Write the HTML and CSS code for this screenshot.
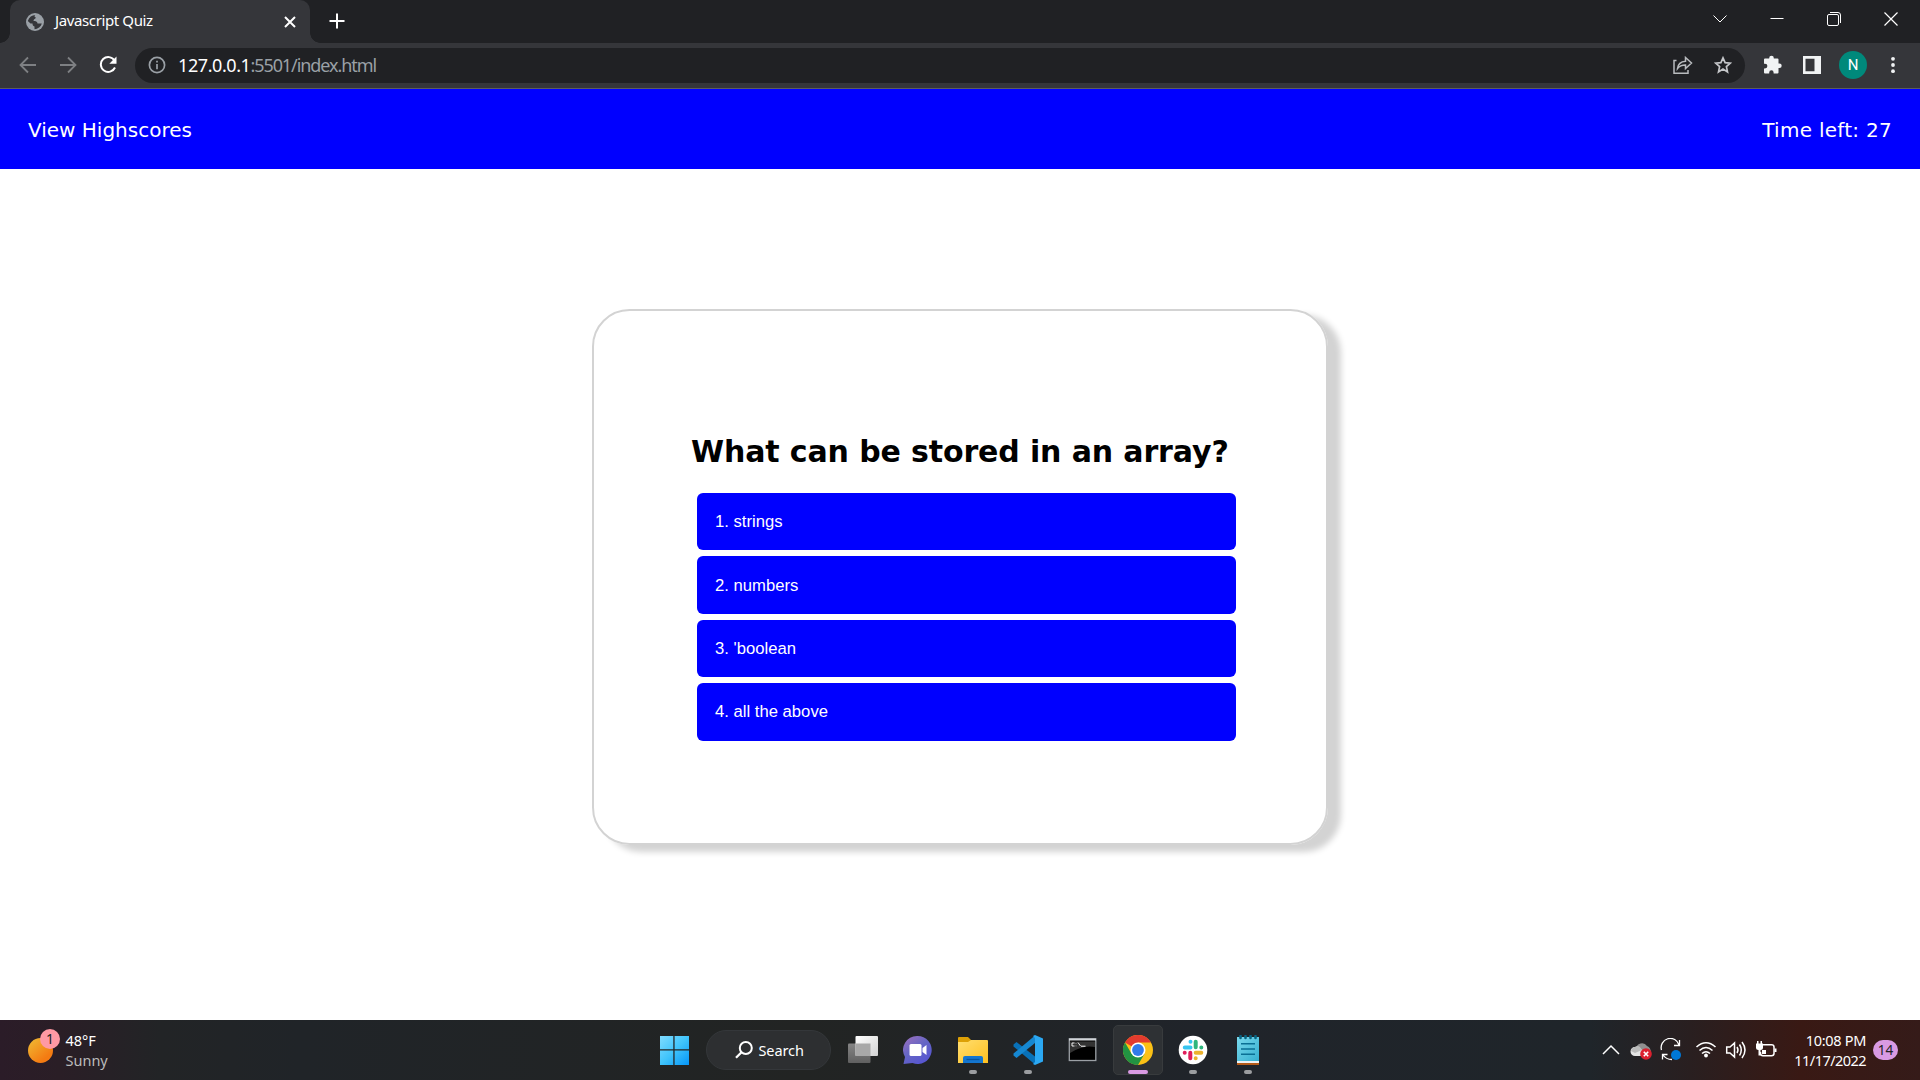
FILE: index.html
```html
<!DOCTYPE html>
<html lang="en">
<head>
<meta charset="utf-8">
<title>Javascript Quiz</title>
<link rel="stylesheet" href="styles.css">
</head>
<body>
<div class="tabstrip">
  <div class="tab">
    <svg class="globe" width="18" height="18" viewBox="0 0 18 18"><circle cx="9" cy="9" r="9" fill="#9aa0a6"/><path d="M1.8 8C3 4 6 2 9.300 1.900C8 3 8.500 4 10 4.500C9.500 6 7.500 6 7.500 8C9.500 8 11.500 8.500 11.500 10.500H15.800C15 13.500 12 16 8.500 16.200V13.500C7 13 6.500 12 6.500 10.500H4.500Z" fill="#35363a"/><path d="M10.500 4.500C9 6.500 9.500 7.500 11.500 8C13 9 14 9.500 16 9C16 5 13.500 2.800 12.500 2.600C12 3 11.500 4 10.500 4.500Z" fill="#9aa0a6"/></svg>
    <span class="tab-title">Javascript Quiz</span>
    <svg class="tab-close" width="12" height="12" viewBox="0 0 12 12"><path d="M1 1L11 11M11 1L1 11" stroke="#fff" stroke-width="2"/></svg>
  </div>
  <svg class="new-tab" width="16" height="16" viewBox="0 0 16 16"><path d="M8 .5V15.500M.5 8H15.500" stroke="#fff" stroke-width="2"/></svg>
  <div class="window-controls">
    <svg width="14" height="14" viewBox="0 0 14 14"><path d="M.5 3.500L7 10L13.500 3.500" fill="none" stroke="#fff"/></svg>
    <svg width="14" height="14" viewBox="0 0 14 14"><path d="M.5 6.500H13.500" stroke="#fff"/></svg>
    <svg width="14" height="14" viewBox="0 0 14 14"><rect x=".5" y="2.500" width="11" height="11" rx="1.500" fill="none" stroke="#fff"/><path d="M3 .5H11Q13.500 .5 13.500 3V11" fill="none" stroke="#fff"/></svg>
    <svg width="14" height="14" viewBox="0 0 14 14"><path d="M.5 .5L13.500 13.500M13.500 .5L.5 13.500" stroke="#fff" stroke-width="1.200"/></svg>
  </div>
</div>
<div class="toolbar">
  <div class="nav-buttons">
    <svg width="18" height="18" viewBox="0 0 18 18"><path d="M17 9H2M9 1.500L1.500 9L9 16.500" fill="none" stroke="#7e8083" stroke-width="1.800"/></svg>
    <svg width="18" height="18" viewBox="0 0 18 18"><path d="M1 9H16M9 1.500L16.500 9L9 16.500" fill="none" stroke="#7e8083" stroke-width="1.800"/></svg>
    <svg width="18" height="18" viewBox="0 0 18 18"><path d="M15.500 4.500A7.400 7.400 0 1 0 16 11.500" fill="none" stroke="#fff" stroke-width="2"/><path d="M17.500 .5V7.800H10.300Z" fill="#fff"/></svg>
  </div>
  <div class="address">
    <svg width="18" height="18" viewBox="0 0 18 18"><circle cx="9" cy="9" r="7.600" fill="none" stroke="#9aa0a6" stroke-width="1.700"/><path d="M9 8V13.200M9 4.700V6.500" stroke="#9aa0a6" stroke-width="1.700"/></svg>
    <span class="url"><span class="host">127.0.0.1</span>:5501/index.html</span>
    <svg class="share" width="20" height="18" viewBox="0 0 20 18"><path d="M3.500 4.500H1V17.200H15V14M4.500 12.500C5 8 8 5.500 12.500 5.200V1.500L18.500 7L12.500 12.500V9C8.500 9 6 10.500 4.500 12.500Z" fill="none" stroke="#b8bbbe" stroke-width="1.500"/></svg>
    <svg width="18" height="18" viewBox="0 0 18 18"><path d="M9 1.900L11.100 6.700L16.300 7.200L12.400 10.600L13.500 15.900L9 13.100L4.500 15.900L5.600 10.600L1.700 7.200L6.900 6.700Z" fill="none" stroke="#c4c6c9" stroke-width="1.700"/></svg>
  </div>
  <div class="extensions">
    <svg width="20" height="20" viewBox="0 0 20 20"><path d="M1 4.500Q1 3.500 2 3.500H6.200V3A2.300 2.300 0 0 1 10.800 3V3.500H14.500Q15.500 3.500 15.500 4.500V8.500H16.400A2.300 2.300 0 0 1 16.400 13.100H15.500V17.500Q15.500 18.500 14.500 18.500H10.600V17.500A2.200 2.200 0 0 0 6.200 17.500V18.500H2Q1 18.500 1 17.500V13.500H2A2.300 2.300 0 0 0 2 8.700H1Z" fill="#f1f3f4"/></svg>
    <svg width="18" height="18" viewBox="0 0 18 18"><path d="M0 0H18V18H0ZM2.500 2.800V15.200H11.500V2.800Z" fill="#f1f3f4" fill-rule="evenodd"/></svg>
    <span class="avatar">N</span>
    <svg width="4" height="18" viewBox="0 0 4 18"><g fill="#f1f3f4"><circle cx="2" cy="2.800" r="1.900"/><circle cx="2" cy="9" r="1.900"/><circle cx="2" cy="15.200" r="1.900"/></g></svg>
  </div>
</div>

<header class="quiz-header">
  <span class="highscores">View Highscores</span>
  <span class="timer">Time left: 27</span>
</header>
<main class="quiz">
  <section class="card">
    <h1>What can be stored in an array?</h1>
    <div class="choices">
      <button>1. strings</button>
      <button>2. numbers</button>
      <button>3. 'boolean</button>
      <button>4. all the above</button>
    </div>
  </section>
</main>

<footer class="taskbar">
  <div class="weather">
    <div class="sun"><span class="sun-badge">1</span></div>
    <div class="weather-text"><span>48°F</span><span class="sky">Sunny</span></div>
  </div>
  <nav class="apps">
    <div class="app">
      <svg width="30" height="30" viewBox="0 0 30 30"><defs><linearGradient id="win" x1="0" y1="0" x2="1" y2="1"><stop offset="0" stop-color="#80dcff"/><stop offset=".5" stop-color="#40c4fb"/><stop offset="1" stop-color="#0595f7"/></linearGradient></defs><path d="M1 1H14.300V14.300H1ZM15.600 1H30V14.300H15.600ZM1 15.600H14.300V30H1ZM15.600 15.600H30V30H15.600Z" fill="url(#win)"/></svg>
    </div>
    <div class="search">
      <svg width="18" height="18" viewBox="0 0 18 18"><circle cx="10.800" cy="7" r="6" fill="none" stroke="#fff" stroke-width="2"/><path d="M6.500 11.200L1 16.800" stroke="#fff" stroke-width="2.200"/></svg>
      <span>Search</span>
    </div>
    <div class="app">
      <svg width="30" height="30" viewBox="0 0 30 30"><defs><linearGradient id="tv" x1="0" y1="0" x2="1" y2="1"><stop offset="0" stop-color="#fff"/><stop offset="1" stop-color="#d2d2d2"/></linearGradient><linearGradient id="tv2" x1="0" y1="0" x2="0" y2="1"><stop offset="0" stop-color="#858585"/><stop offset="1" stop-color="#606060"/></linearGradient></defs><rect y="8.500" width="22.500" height="19.500" rx="1" fill="url(#tv2)"/><rect x="7.500" y="1" width="22.500" height="20" rx="1" fill="url(#tv)"/><path d="M7.500 8.500H22.500V21H7.500Z" fill="#a8a8a8"/></svg>
    </div>
    <div class="app">
      <svg width="30" height="30" viewBox="0 0 30 30"><defs><linearGradient id="chat" x1="0" y1="0" x2=".7" y2="1"><stop offset="0" stop-color="#a070bd"/><stop offset=".5" stop-color="#6666c4"/><stop offset="1" stop-color="#5655d2"/></linearGradient></defs><path d="M14.500 1A14 14 0 1 1 9.500 28L.5 29L2 22A14 14 0 0 1 14.500 1Z" fill="url(#chat)"/><rect x="6.500" y="9" width="12" height="12" rx="1.500" fill="#fff"/><path d="M19.500 13L23.500 10V20L19.500 17Z" fill="#fff"/></svg>
    </div>
    <div class="app">
      <svg width="30" height="30" viewBox="0 0 30 30"><defs><linearGradient id="fold" x1="0" y1="0" x2="1" y2="1"><stop offset="0" stop-color="#ffde70"/><stop offset="1" stop-color="#ffc01f"/></linearGradient></defs><path d="M0 3Q0 2 1 2H10L13 5V9H0Z" fill="#dda006"/><path d="M0 7H10L13 5H29Q30 5 30 6V28H0Z" fill="url(#fold)"/><path d="M5 28V23Q5 21 7 21H23Q25 21 25 23V28Z" fill="#1476cf"/><path d="M8.500 24.500H21.500" stroke="#0755a0" stroke-width="1.300"/></svg><i class="running"></i>
    </div>
    <div class="app">
      <svg width="30" height="30" viewBox="0 0 30 30"><path d="M.5 9.500L3.500 7L22 21.500V29.500L.5 11.500Z" fill="#0871b8"/><path d="M.5 18.500L22 .5V8L3.500 23L.5 20.500Z" fill="#1688d2"/><path d="M22 0L30 3.500V26.500L22 30L20 29L22 27V3L20 1Z" fill="#2ba8f3"/></svg><i class="running"></i>
    </div>
    <div class="app">
      <svg width="30" height="30" viewBox="0 0 30 30"><rect x="1.300" y="3.800" width="26.500" height="21.700" fill="#000" stroke="#9ba0a5" stroke-width="1.300"/><path d="M2 6.500V18Q15 9.500 27 12V6.500Z" fill="#333"/><path d="M1 4.500H28" stroke="#d0d4d8" stroke-width="2"/><path d="M6.500 8H4V11H6.500M8 8.500V9M8 10.700V11.200M10 7.500L12.500 11" fill="none" stroke="#eee"/><path d="M13 11.200H17.500" stroke="#fff"/></svg>
    </div>
    <div class="app active">
      <svg width="30" height="30" viewBox="0 0 30 30"><circle cx="15" cy="15" r="15" fill="#fbc116"/><path d="M15 15L2 7.500A15 15 0 0 1 28 7.500H15Z" fill="#e33b2e"/><path d="M2 7.500A15 15 0 0 0 15 30L21.500 18.800L15 15L8.500 18.800Z" fill="#229342"/><circle cx="15" cy="15" r="7.500" fill="#fff"/><circle cx="15" cy="15" r="5.900" fill="#327bea"/></svg><i class="running current"></i>
    </div>
    <div class="app">
      <svg width="30" height="30" viewBox="0 0 30 30"><circle cx="15" cy="15" r="14.300" fill="#fff"/><g stroke-width="4" stroke-linecap="round"><path d="M12.500 6.700V6.700M6.800 12.500H12.500" stroke="#36c5f0"/><path d="M17.700 6.800V12.300M23.300 12.400V12.400" stroke="#2eb67d"/><path d="M17.700 17.700H23.300M17.700 23.300V23.300" stroke="#ecb22e"/><path d="M12.300 17.700V23.300M6.700 17.700V17.700" stroke="#e01e5a"/></g></svg><i class="running"></i>
    </div>
    <div class="app">
      <svg width="30" height="30" viewBox="0 0 30 30"><defs><linearGradient id="note" x1="0" y1="0" x2="1" y2="1"><stop offset="0" stop-color="#79d9ed"/><stop offset="1" stop-color="#35afd0"/></linearGradient></defs><path d="M4 26H26V30H4Z" fill="#b55b19"/><path d="M4 3H26V28H4Z" fill="#edf2f4"/><path d="M4 2H26V26H4Z" fill="url(#note)"/><path d="M8 8.700H22M8 14H22M8 19.200H22" stroke="#0a6f94" stroke-width="1.600"/><path d="M7.500 1V3M12.500 1V3M17.500 1V3M22.500 1V3" stroke="#086381" stroke-width="2.600" stroke-linecap="round"/></svg><i class="running"></i>
    </div>
  </nav>
  <div class="tray">
    <svg width="30" height="24" viewBox="0 0 30 24"><path d="M7 16L15 8L23 16" fill="none" stroke="#fff" stroke-width="1.500"/></svg>
    <svg width="30" height="24" viewBox="0 0 30 24"><path d="M10 11A6 6 0 0 1 21 8Q25 9 25 16H10Z" fill="#8f8f8f"/><path d="M9 18A4.500 4.500 0 0 1 9 9Q13 8 16 12L20 18Z" fill="#e4e4e4"/><path d="M9 9Q13 6 16 12L9 15L5 13Q6 9 9 9Z" fill="#bbb"/><circle cx="20" cy="16" r="5.800" fill="#dc202e"/><path d="M17.800 13.800L22.200 18.200M22.200 13.800L17.800 18.200" stroke="#fff" stroke-width="1.600"/></svg>
    <svg width="30" height="24" viewBox="0 0 30 24"><path d="M5.500 12A9 9 0 0 1 23 7M23.500 2V7.500H18M11.500 16.500H6.500V21.500M7 17Q10 21.500 16 21.500" fill="none" stroke="#fff" stroke-width="1.300"/><circle cx="20" cy="17" r="5" fill="#0078d7"/></svg>
    <svg class="wifi" width="30" height="24" viewBox="0 0 30 24"><path d="M5.500 9Q15 .5 24.500 9M8.500 12.500Q15 6.500 21.500 12.500M11 15.500Q15 12 19 15.500" fill="none" stroke="#fff" stroke-width="1.600"/><circle cx="15" cy="17.500" r="1.900" fill="#fff"/></svg>
    <svg width="30" height="24" viewBox="0 0 30 24"><path d="M5.700 9H9L13.500 5V19L9 15H5.700ZM16 9Q18 12 16 15M18.500 6.500Q22 12 18.500 17.500M21 4Q27 12 21 20" fill="none" stroke="#fff" stroke-width="1.500"/></svg>
    <svg width="30" height="24" viewBox="0 0 30 24"><path d="M12 6.800H20.500Q23 6.800 23 9V15.500Q23 17.700 20.500 17.700H12Q9.500 17.700 9.500 15.500V14" fill="none" stroke="#fff" stroke-width="1.500"/><path d="M11 12H15V16H11ZM23.500 10.500H25.500V14H23.500ZM5 5.500H12V10Q12 12 9.500 12V17.500H7.500V12Q5 12 5 10ZM6 3H7.500V6H6ZM9.500 3H11V6H9.500Z" fill="#fff"/></svg>
    <div class="clock"><span>10:08 PM</span><span class="date">11/17/2022</span></div>
    <span class="notifications">14</span>
  </div>
</footer>
</body>
</html>
```
FILE: styles.css
```css
* { box-sizing: border-box; }

body {
  margin: 0;
  width: 1920px;
  height: 1080px;
  overflow: hidden;
  display: flex;
  flex-direction: column;
  background: #fff;
  font-family: "Noto Sans", "Open Sans", sans-serif;
}

svg { display: block; flex: none; }

/* Browser chrome */
.tabstrip {
  height: 43px;
  flex: none;
  display: flex;
  background: #202124;
  padding-left: 10px;
}

.tab {
  position: relative;
  width: 300px;
  height: 43px;
  display: flex;
  align-items: center;
  padding: 0 14px 0 16px;
  background: #35363a;
  border-radius: 10px 10px 0 0;
  color: #fff;
  font-size: 15px;
}

.tab::before,
.tab::after {
  content: "";
  position: absolute;
  bottom: 0;
  width: 10px;
  height: 10px;
}

.tab::before {
  left: -10px;
  background: radial-gradient(circle at 0 0, transparent 9.5px, #35363a 10px);
}

.tab::after {
  right: -10px;
  background: radial-gradient(circle at 100% 0, transparent 9.5px, #35363a 10px);
}

.tab-title { margin-left: 11px; padding-bottom: 3px; letter-spacing: -0.38px; }
.tab-close { margin-left: auto; }
.new-tab { margin: 13px 0 0 19px; }

.window-controls {
  display: flex;
  gap: 43px;
  margin: 12px 22px 0 auto;
}

.toolbar {
  height: 46px;
  flex: none;
  display: flex;
  align-items: center;
  background: #35363a;
  border-bottom: 1px solid #5c5d60;
  padding-bottom: 1px;
}

.nav-buttons {
  width: 135px;
  display: flex;
  gap: 22px;
  padding-left: 19px;
}

.address {
  width: 1610px;
  height: 35px;
  display: flex;
  align-items: center;
  background: #202124;
  border-radius: 18px;
  padding: 0 13px 0 13px;
}

.url {
  margin-left: 12px;
  color: #9aa0a6;
  font-size: 18px;
  line-height: 34px;
  letter-spacing: -1.08px;
}

.host { color: #fff; letter-spacing: -0.42px; }
.share { margin-left: auto; margin-right: 21px; }

.extensions {
  display: flex;
  align-items: center;
  flex: 1;
  padding-left: 18px;
}

.extensions svg:nth-child(2) { margin-left: 20px; }

.avatar {
  width: 28px;
  height: 28px;
  margin: 0 24px 0 18px;
  border-radius: 50%;
  background: #00897b;
  color: #fff;
  font: 15px/28px Roboto, sans-serif;
  text-align: center;
}

/* Quiz page */
.quiz-header {
  height: 80px;
  flex: none;
  display: flex;
  align-items: center;
  justify-content: space-between;
  padding: 2px 28px 0;
  background: #00f;
  color: #fff;
  font: 20px/24px "DejaVu Sans", Verdana, sans-serif;
}

.timer { letter-spacing: 0.27px; }

.quiz {
  flex: 1;
  padding: 140px 0 0 592px;
}

.card {
  width: 736px;
  height: 536px;
  padding: 123px 97px 0;
  border: 2px solid #d3d3d3;
  border-radius: 37.5px;
  box-shadow: 12.5px 6.25px 6.25px #d3d3d3;
}

h1 {
  margin: 0;
  color: #000;
  font: bold 30px/36px "DejaVu Sans", Verdana, sans-serif;
  letter-spacing: -0.13px;
  white-space: nowrap;
}

.choices {
  width: 539px;
  display: flex;
  flex-direction: column;
  gap: 6px;
  margin: 23px 0 0 6px;
}

.choices button {
  height: 57.4px;
  border: 0;
  border-radius: 6px;
  padding: 1px 18px 0;
  background: #00f;
  color: #fff;
  font: 16.67px/20px "Liberation Sans", Arial, sans-serif;
  text-align: left;
}

/* Taskbar */
.taskbar {
  height: 60px;
  flex: none;
  display: grid;
  grid-template-columns: 649px 1fr 324px;
  color: #fff;
  font-size: 14.5px;
  background: linear-gradient(90deg, #2b1c28 0, #2a1e26 60px, #222426 160px, #202428 300px, #222423 800px, #20242a 1200px, #1f252a 1590px, #291f20 1690px, #391914 1800px, #351b19 1920px);
}

.weather {
  display: flex;
  padding: 10px 0 0 28px;
}

.sun {
  position: relative;
  width: 25px;
  height: 25px;
  margin-top: 8px;
  border-radius: 50%;
  background: linear-gradient(140deg, #f0bd35, #f47b12 75%);
}

.sun-badge {
  position: absolute;
  left: 12px;
  top: -9px;
  width: 20px;
  height: 20px;
  border-radius: 50%;
  background: #ff99a4;
  color: #222;
  font-size: 14px;
  line-height: 20px;
  text-align: center;
}

.weather-text {
  display: flex;
  flex-direction: column;
  margin-left: 12.5px;
  line-height: 20px;
}

.sky { color: #bbb; }

.apps { display: flex; align-items: center; gap: 5px; }

.app {
  position: relative;
  width: 50px;
  height: 50px;
  display: flex;
  align-items: center;
  justify-content: center;
}

.app.active {
  background: #2e3134;
  border: 1px solid #383b3d;
  border-radius: 5px;
}

.running {
  position: absolute;
  left: 21px;
  bottom: 1px;
  width: 8px;
  height: 4px;
  border-radius: 2px;
  background: #9b9da0;
}

.running.current { left: 14px; bottom: 0; width: 20px; background: #d99ae3; }

.search {
  width: 125px;
  height: 40px;
  display: flex;
  align-items: center;
  gap: 5.5px;
  margin: 0 2px;
  padding-left: 28px;
  border: 1px solid #34373a;
  border-radius: 20px;
  background: #2d2f31;
  letter-spacing: -0.1px;
}

.tray {
  display: flex;
  align-items: center;
}

.tray .wifi { margin-left: 5px; }

.clock {
  width: 85px;
  display: flex;
  flex-direction: column;
  align-items: flex-end;
  line-height: 20px;
  letter-spacing: -0.3px;
  white-space: nowrap;
  padding-bottom: 1px;
}

.clock .date { letter-spacing: -0.55px; }

.notifications {
  width: 25px;
  height: 20px;
  margin-left: 7px;
  border-radius: 10px;
  background: #d99ae3;
  color: #222;
  font-size: 13.5px;
  line-height: 20px;
  text-align: center;
}
```
